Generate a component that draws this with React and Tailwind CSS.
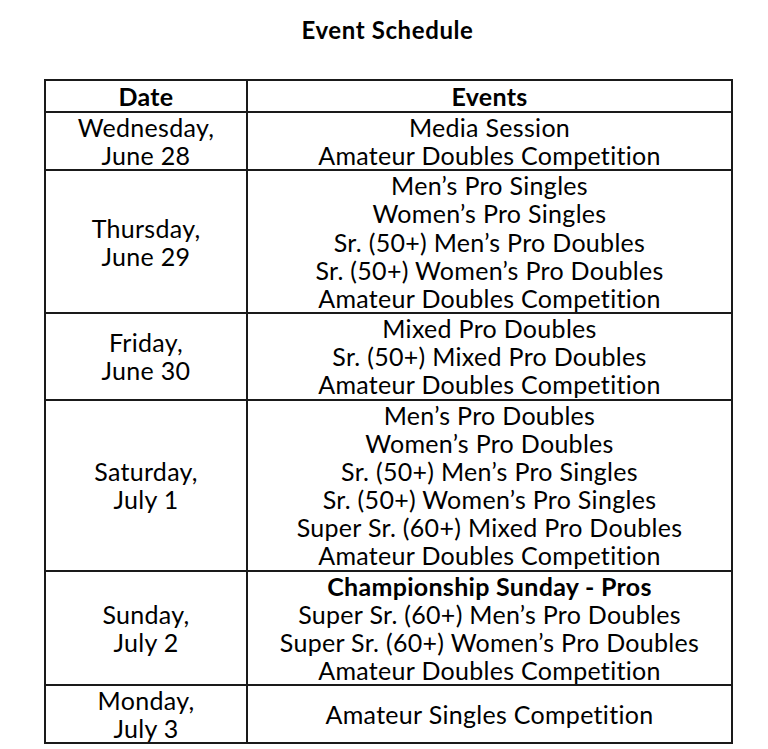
import React from "react";

const rows = [
  { date: ["Wednesday,", "June 28"], events: ["Media Session", "Amateur Doubles Competition"] },
  {
    date: ["Thursday,", "June 29"],
    events: [
      "Men’s Pro Singles",
      "Women’s Pro Singles",
      "Sr. (50+) Men’s Pro Doubles",
      "Sr. (50+) Women’s Pro Doubles",
      "Amateur Doubles Competition",
    ],
  },
  {
    date: ["Friday,", "June 30"],
    events: ["Mixed Pro Doubles", "Sr. (50+) Mixed Pro Doubles", "Amateur Doubles Competition"],
  },
  {
    date: ["Saturday,", "July 1"],
    events: [
      "Men’s Pro Doubles",
      "Women’s Pro Doubles",
      "Sr. (50+) Men’s Pro Singles",
      "Sr. (50+) Women’s Pro Singles",
      "Super Sr. (60+) Mixed Pro Doubles",
      "Amateur Doubles Competition",
    ],
  },
  {
    date: ["Sunday,", "July 2"],
    events: [
      { b: "Championship Sunday - Pros" },
      "Super Sr. (60+) Men’s Pro Doubles",
      "Super Sr. (60+) Women’s Pro Doubles",
      "Amateur Doubles Competition",
    ],
  },
  { date: ["Monday,", "July 3"], events: ["Amateur Singles Competition"] },
];

export default function App() {
  return (
    <div className="w-[768px] h-[749px] bg-white text-black overflow-hidden font-['Lato',sans-serif]">
      <div className="ml-[44px] w-[687px]">
        <h1 className="pt-[15px] h-[79px] text-center text-[24px] leading-[30px] tracking-[0.6px] font-bold">Event Schedule</h1>
        <table className="w-[687px] border-collapse border-2 border-[#1a1a1a] text-[25px] leading-[28.15px] tracking-[0.3px] table-fixed">
          <colgroup>
            <col className="w-[202px]" />
            <col className="w-[485px]" />
          </colgroup>
          <thead>
            <tr>
              <th className="border-2 border-[#1a1a1a] h-[32px] p-0 font-bold text-center">Date</th>
              <th className="border-2 border-[#1a1a1a] h-[32px] p-0 font-bold text-center">Events</th>
            </tr>
          </thead>
          <tbody>
            {rows.map((r, i) => (
              <tr key={i}>
                <td className="border-2 border-[#1a1a1a] p-0 text-center align-middle">
                  {r.date.map((d, j) => (
                    <div key={j}>{d}</div>
                  ))}
                </td>
                <td className="border-2 border-[#1a1a1a] p-0 text-center align-middle">
                  {r.events.map((e, j) =>
                    typeof e === "string" ? (
                      <div key={j}>{e}</div>
                    ) : (
                      <div key={j} className="font-bold">{e.b}</div>
                    )
                  )}
                </td>
              </tr>
            ))}
          </tbody>
        </table>
      </div>
    </div>
  );
}
